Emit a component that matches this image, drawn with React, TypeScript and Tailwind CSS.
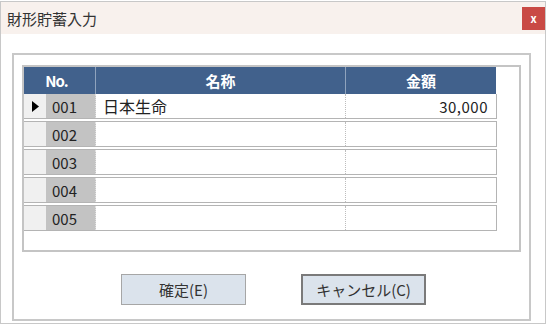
import React from 'react';

const rows = [
  { no: '001', name: '日本生命', amount: '30,000', current: true },
  { no: '002', name: '', amount: '' },
  { no: '003', name: '', amount: '' },
  { no: '004', name: '', amount: '' },
  { no: '005', name: '', amount: '' },
];

const App: React.FC = () => {
  return (
    <div
      className="w-[548px] h-[325px] bg-white overflow-hidden text-[#222]"
      style={{ fontFamily: '"Noto Sans CJK JP", "Noto Sans", sans-serif' }}
    >
      {/* Window */}
      <div className="mt-[1px] w-[546px] h-[323px] border border-[#c8c8c8] flex flex-col">
        {/* Title bar */}
        <div className="h-[32px] bg-[#f8f1ed] flex items-center justify-between pl-[6px]">
          <span className="text-[15px] leading-none text-[#333]">財形貯蓄入力</span>
          <div className="w-[23px] h-[23px] bg-[#c94a45] flex items-center justify-center text-white text-[11px] font-bold leading-none">
            x
          </div>
        </div>

        {/* Body */}
        <div className="flex-1 bg-white pl-[11px] pt-[19px]">
          {/* Group box */}
          <div className="w-[519px] h-[268px] border-2 border-[#c8c8c8] pl-[8px] pt-[10px]">
            {/* Grid */}
            <div className="w-[499px] h-[187px] border-2 border-[#c4c4c4] bg-white">
              {/* Header */}
              <div className="flex w-[472px] h-[27px] bg-[#41618c] text-white font-bold text-[15px] leading-none">
                <div className="w-[72px] flex items-center justify-center border-r border-[#8fa3bd] pr-[6px]">
                  <span className="tracking-[-1px]">No.</span>
                </div>
                <div className="w-[250px] flex items-center justify-center border-r border-[#8fa3bd]">名称</div>
                <div className="flex-1 flex items-center justify-center">金額</div>
              </div>

              {/* Rows */}
              {rows.map((r, i) => (
                <div
                  key={r.no}
                  className={`flex w-[473px] h-[25px] border-r border-b border-[#b4b4b4] ${
                    i === 0 ? '' : 'mt-[2px] border-t h-[26px]'
                  }`}
                >
                  <div className="w-[22px] bg-[#f0f0f0] flex items-center justify-center">
                    {r.current && (
                      <svg width="7" height="11" viewBox="0 0 7 11">
                        <polygon points="0,0 7,5.5 0,11" fill="#000" />
                      </svg>
                    )}
                  </div>
                  <div className="w-[50px] bg-[#c3c3c3] border-r border-dotted border-[#e0e0e0] flex items-center pl-[6px] text-[15px] leading-none">
                    {r.no}
                  </div>
                  <div className="w-[250px] border-r border-dotted border-[#bdbdbd] flex items-center pl-[7px] text-[16px] leading-none">
                    {r.name}
                  </div>
                  <div className="flex-1 flex items-center justify-end pr-[8px] text-[15px] leading-none tracking-[0.5px]">
                    {r.amount}
                  </div>
                </div>
              ))}
            </div>

            {/* Buttons */}
            <div className="flex mt-[22px] pl-[99px] gap-[55px]">
              <div className="w-[125px] h-[31px] bg-[#dbe3ec] border border-[#a6a6a6] flex items-center justify-center text-[15px] text-[#333] leading-none">
                確定(E)
              </div>
              <div className="w-[125px] h-[31px] bg-[#dbe3ec] border-2 border-[#7a7a7a] flex items-center justify-center text-[15px] text-[#333] leading-none">
                キャンセル(C)
              </div>
            </div>
          </div>
        </div>
      </div>
    </div>
  );
};

export default App;
